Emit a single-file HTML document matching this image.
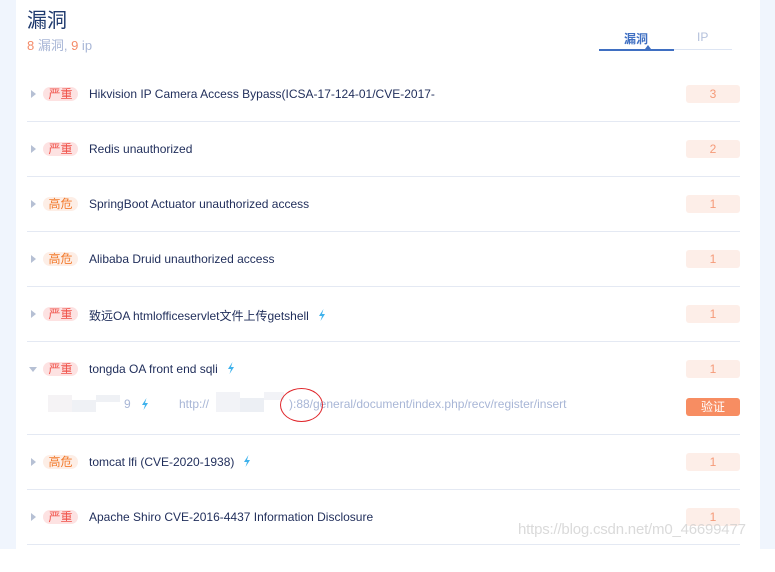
<!DOCTYPE html>
<html><head><meta charset="utf-8"><style>
*{margin:0;padding:0;box-sizing:border-box}
body{width:775px;height:549px;overflow:hidden;background:#fff;font-family:"Liberation Sans","Noto Sans CJK SC",sans-serif;position:relative}
.lp{position:absolute;left:0;top:0;width:16px;height:549px;background:#f0f5fd}
.rp{position:absolute;left:760px;top:0;width:15px;height:549px;background:#f0f5fd}
.a{position:absolute}
.title{left:27px;top:4px;font-size:20px;color:#1f3a6e}
.sub{left:27px;top:35px;font-size:13px;color:#a8b6d6}
.sub b{font-weight:normal;color:#f48c6a}
.tab{top:30px;font-size:12px}
.row{position:absolute;left:27px;width:713px;height:55px}
.row .arr{position:absolute;left:4px;top:-4px;width:0;height:0;border-left:5px solid #b6c0d4;border-top:4px solid transparent;border-bottom:4px solid transparent}
.row .arr.dn{left:2px;top:-2px;border-top:5px solid #b6c0d4;border-left:4px solid transparent;border-right:4px solid transparent;border-bottom:0}
.tag{position:absolute;left:16px;top:-7px;width:35px;height:14px;border-radius:7px;font-size:12px;line-height:14px;text-align:center}
.t1{background:#fde2e2;color:#f0524a}
.t2{background:#fdeee6;color:#f27a2c}
.nm{position:absolute;left:62px;top:-7px;font-size:12px;color:#1f2d5a;white-space:nowrap}
.bolt{display:inline-block;width:8px;height:12px;margin-left:9px;vertical-align:-1px}
.cnt{position:absolute;left:659px;top:-9px;width:54px;height:18px;border-radius:3px;background:#fdeee8;color:#f59a78;font-size:12px;line-height:18px;text-align:center}
.div{position:absolute;left:27px;width:713px;height:1px;background:#e4e9f3}
</style></head><body>
<svg width="0" height="0" style="position:absolute"><defs><symbol id="b" viewBox="0 0 8 12"><path d="M5.5 0 L1 7 H4 L2.5 12 L7 5 H4 Z" fill="#3fb2ec"/></symbol></defs></svg>
<div class="lp"></div><div class="rp"></div>
<div class="a title">漏洞</div>
<div class="a sub"><b>8</b> 漏洞, <b>9</b> ip</div>
<div class="a tab" style="left:624px;color:#3f6fc2;font-weight:bold">漏洞</div>
<div class="a tab" style="left:697px;color:#b4c0db">IP</div>
<div class="a" style="left:599px;top:49px;width:75px;height:2px;background:#3f6fc2"></div>
<div class="a" style="left:674px;top:49px;width:58px;height:1px;background:#dde5f3"></div>
<div class="a" style="left:645px;top:45px;width:0;height:0;border-bottom:4px solid #3f6fc2;border-left:3px solid transparent;border-right:3px solid transparent"></div>

<div class="row" style="top:94px"><div class="arr"></div><div class="tag t1">严重</div><div class="nm">Hikvision IP Camera Access Bypass(ICSA-17-124-01/CVE-2017-</div><div class="cnt">3</div></div>
<div class="div" style="top:121px"></div>
<div class="row" style="top:149px"><div class="arr"></div><div class="tag t1">严重</div><div class="nm">Redis unauthorized</div><div class="cnt">2</div></div>
<div class="div" style="top:176px"></div>
<div class="row" style="top:204px"><div class="arr"></div><div class="tag t2">高危</div><div class="nm">SpringBoot Actuator unauthorized access</div><div class="cnt">1</div></div>
<div class="div" style="top:231px"></div>
<div class="row" style="top:259px"><div class="arr"></div><div class="tag t2">高危</div><div class="nm">Alibaba Druid unauthorized access</div><div class="cnt">1</div></div>
<div class="div" style="top:286px"></div>
<div class="row" style="top:314px"><div class="arr"></div><div class="tag t1">严重</div><div class="nm">致远OA htmlofficeservlet文件上传getshell<svg class="bolt"><use href="#b"/></svg></div><div class="cnt">1</div></div>
<div class="div" style="top:341px"></div>
<div class="row" style="top:369px"><div class="arr dn"></div><div class="tag t1">严重</div><div class="nm">tongda OA front end sqli<svg class="bolt"><use href="#b"/></svg></div><div class="cnt">1</div></div>
<div class="a" style="left:48px;top:395px;width:24px;height:17px;background:#f5f3f5"></div>
<div class="a" style="left:72px;top:400px;width:24px;height:12px;background:#eff1f5"></div>
<div class="a" style="left:96px;top:395px;width:24px;height:7px;background:#eff1f5"></div>
<div class="a" style="left:124px;top:397px;font-size:12px;color:#a8b6d6">9</div>
<svg class="a" style="left:141px;top:398px" width="8" height="12"><use href="#b"/></svg>
<div class="a" style="left:179px;top:397px;font-size:12px;color:#a8b6d6">http://</div>
<div class="a" style="left:216px;top:392px;width:24px;height:20px;background:#f2f3f7"></div>
<div class="a" style="left:240px;top:398px;width:24px;height:14px;background:#eceff4"></div>
<div class="a" style="left:264px;top:392px;width:20px;height:8px;background:#f2f3f7"></div>
<div class="a" style="left:289px;top:397px;font-size:12px;color:#a8b6d6;white-space:nowrap">):88/general/document/index.php/recv/register/insert</div>
<div class="a" style="left:280px;top:388px;width:43px;height:34px;border:1.5px solid #e0262b;border-radius:50%"></div>
<div class="a" style="left:686px;top:398px;width:54px;height:18px;border-radius:3px;background:#f78d62;color:#fff;font-size:12px;line-height:18px;text-align:center">验证</div>
<div class="div" style="top:434px"></div>
<div class="row" style="top:462px"><div class="arr"></div><div class="tag t2">高危</div><div class="nm">tomcat lfi (CVE-2020-1938)<svg class="bolt"><use href="#b"/></svg></div><div class="cnt">1</div></div>
<div class="div" style="top:489px"></div>
<div class="row" style="top:517px"><div class="arr"></div><div class="tag t1">严重</div><div class="nm">Apache Shiro CVE-2016-4437 Information Disclosure</div><div class="cnt">1</div></div>
<div class="div" style="top:544px"></div>
<div class="a" style="left:518px;top:521px;font-size:15px;color:rgba(205,205,205,0.75);white-space:nowrap;letter-spacing:-0.2px">https://blog.csdn.net/m0_46699477</div>
</body></html>
